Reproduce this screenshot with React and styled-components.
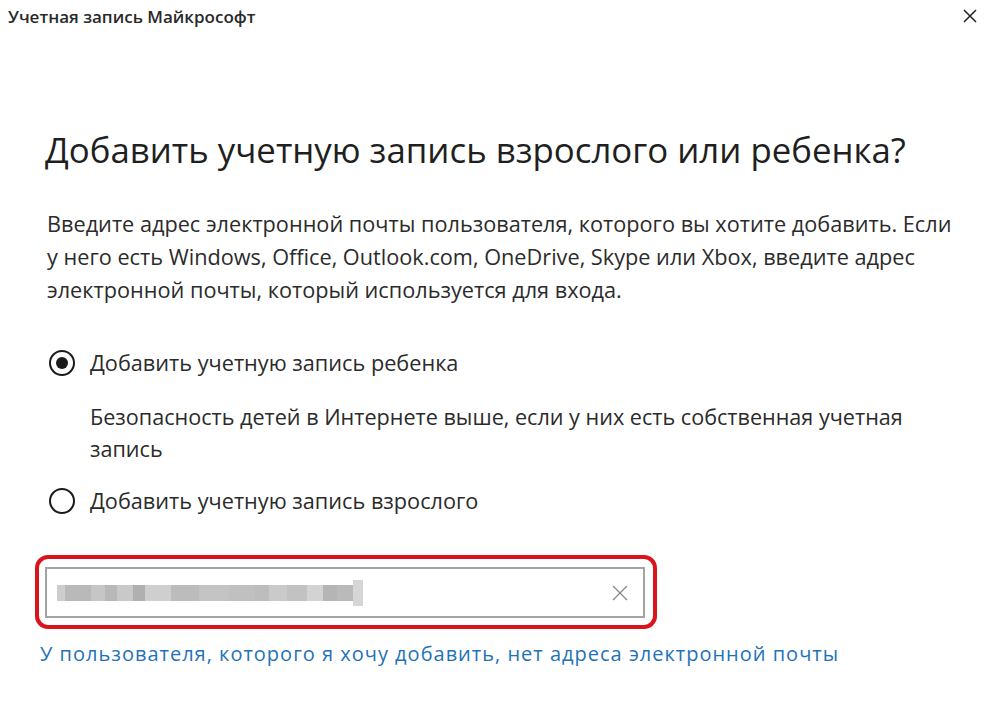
import React from "react";
import styled, { createGlobalStyle } from "styled-components";

const Global = createGlobalStyle`
  html, body { margin: 0; padding: 0; background: #fff; }
  body { font-family: "Open Sans", "Noto Sans", sans-serif; color: #222; }
`;

const Window = styled.div`
  width: 1000px;
  height: 702px;
  background: #fff;
  display: flex;
  flex-direction: column;
  overflow: hidden;
`;

const TitleBar = styled.div`
  height: 32px;
  display: flex;
  align-items: center;
  justify-content: space-between;
  padding: 0 18px 0 8px;
`;

const TitleText = styled.span`
  font-size: 17px;
  font-weight: 600;
  color: #2a2a2a;
`;

const CloseBtn = styled.button`
  border: none;
  background: none;
  padding: 0;
  width: 24px;
  height: 24px;
  display: flex;
  align-items: center;
  justify-content: center;
`;

const Content = styled.div`
  padding: 96px 0 0 45px;
  display: flex;
  flex-direction: column;
`;

const Heading = styled.h1`
  margin: 0;
  font-size: 34.8px;
  font-weight: 400;
  line-height: 44px;
  color: #1f1f1f;
  white-space: nowrap;
`;

const Paragraph = styled.div`
  margin-top: 35px;
  margin-left: 2px;
  font-size: 21.7px;
  line-height: 33px;
  color: #2b2b2b;
`;

const Line = styled.div`
  white-space: nowrap;
`;

const RadioRow = styled.label`
  display: flex;
  align-items: center;
  gap: 15px;
  margin-top: ${(p) => p.$top}px;
  margin-left: 4px;
  font-size: 21.7px;
  line-height: 32px;
  color: #2b2b2b;
  white-space: nowrap;
`;

const RadioCircle = styled.span`
  width: 26px;
  height: 26px;
  box-sizing: border-box;
  border: 2.5px solid #1a1a1a;
  border-radius: 50%;
  display: flex;
  align-items: center;
  justify-content: center;
  &::after {
    content: "";
    width: 12px;
    height: 12px;
    border-radius: 50%;
    background: #1a1a1a;
    display: ${(p) => (p.$checked ? "block" : "none")};
  }
`;

const Hint = styled.div`
  margin: 22px 0 0 45px;
  font-size: 21.6px;
  line-height: 32px;
  color: #2b2b2b;
`;

const Highlight = styled.div`
  margin: 38px 0 0 -10px;
  width: 622px;
  height: 74px;
  box-sizing: border-box;
  border: 4px solid #d9141b;
  border-radius: 13px;
  padding: 8px 8px 7px 6px;
  display: flex;
`;

const InputBox = styled.div`
  flex: 1;
  border: 2px solid #a3a3a3;
  display: flex;
  align-items: center;
  padding: 0 14px 0 10px;
`;

const Blur = styled.div`
  display: flex;
  align-items: center;
  height: 26px;
`;

const BlurBlock = styled.span`
  display: block;
  width: ${(p) => p.$w}px;
  height: ${(p) => p.$h || 16}px;
  background: ${(p) => p.$c};
`;

const Spacer = styled.div`
  flex: 1;
`;

const Link = styled.a`
  margin: 12px 0 0 -5px;
  font-size: 20px;
  line-height: 26px;
  color: #1f72b8;
  text-decoration: none;
  white-space: nowrap;
  letter-spacing: 1px;
`;

const blocks = [
  ["#cdcdcd", 8], ["#b9b9b9", 26], ["#c6c6c6", 14], ["#b8b8b8", 12], ["#c9c9c9", 16],
  ["#b0b0b0", 12], ["#cfcfcf", 26], ["#bcbcbc", 28], ["#c4c4c4", 30], ["#c0c0c0", 26],
  ["#bdbdbd", 14], ["#cacaca", 18], ["#c2c2c2", 20], ["#d3d3d3", 16], ["#b5b5b5", 14],
  ["#bababa", 16], ["#d6d6d6", 10, 26],
];

export default function App() {
  return (
    <Window>
      <Global />
      <TitleBar>
        <TitleText>Учетная запись Майкрософт</TitleText>
        <CloseBtn aria-label="Закрыть">
          <svg width="14" height="14" viewBox="0 0 14 14">
            <path d="M1 1L13 13M13 1L1 13" stroke="#222" strokeWidth="1.5" />
          </svg>
        </CloseBtn>
      </TitleBar>
      <Content>
        <Heading>Добавить учетную запись взрослого или ребенка?</Heading>
        <Paragraph>
          <Line>Введите адрес электронной почты пользователя, которого вы хотите добавить. Если</Line>
          <Line>у него есть Windows, Office, Outlook.com, OneDrive, Skype или Xbox, введите адрес</Line>
          <Line>электронной почты, который используется для входа.</Line>
        </Paragraph>
        <RadioRow $top={41}>
          <RadioCircle $checked />
          Добавить учетную запись ребенка
        </RadioRow>
        <Hint>
          <Line>Безопасность детей в Интернете выше, если у них есть собственная учетная</Line>
          <Line>запись</Line>
        </Hint>
        <RadioRow $top={20}>
          <RadioCircle />
          Добавить учетную запись взрослого
        </RadioRow>
        <Highlight>
          <InputBox>
            <Blur>
              {blocks.map(([c, w, h], i) => (
                <BlurBlock key={i} $c={c} $w={w} $h={h} />
              ))}
            </Blur>
            <Spacer />
            <svg width="18" height="18" viewBox="0 0 18 18">
              <path d="M2 2L16 16M16 2L2 16" stroke="#8a8a8a" strokeWidth="1.4" />
            </svg>
          </InputBox>
        </Highlight>
        <Link href="#">У пользователя, которого я хочу добавить, нет адреса электронной почты</Link>
      </Content>
    </Window>
  );
}
